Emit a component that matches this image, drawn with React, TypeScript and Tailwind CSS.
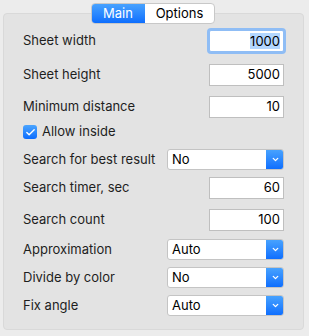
import { Check, ChevronDown } from "lucide-react";

const font = { fontFamily: "Inter, 'Liberation Sans', sans-serif" };

const TextField = ({ value, focused }: { value: string; focused?: boolean }) => (
  <div
    className={`w-[75px] h-[22px] bg-white flex items-center justify-end pr-[3px] text-[13px] text-black ${
      focused
        ? "border border-[#8fbdf5] rounded-[2px] shadow-[0_0_0_2px_#8fbdf5]"
        : "border border-[#bfbfbf]"
    }`}
  >
    {focused ? <span className="bg-[#b3d7ff] leading-[16px]">{value}</span> : value}
  </div>
);

const PopUp = ({ value }: { value: string }) => (
  <div className="w-[117px] h-[21px] flex rounded-[3px] overflow-hidden border border-[#c4c4c4] bg-white">
    <div className="flex-1 flex items-center pl-[4px] text-[13px] text-black">{value}</div>
    <div className="w-[18px] -my-px -mr-px rounded-r-[3px] bg-gradient-to-b from-[#4aa4fe] to-[#0a6bfe] flex items-center justify-center">
      <ChevronDown className="w-[9px] h-[9px] text-white" strokeWidth={3.5} />
    </div>
  </div>
);

const Row = ({ label, children, mt }: { label: string; children: React.ReactNode; mt: string }) => (
  <div className={`flex items-center justify-between ${mt}`}>
    <span className="text-[13px] text-[#1e1e1e]">{label}</span>
    {children}
  </div>
);

export default function App() {
  return (
    <div className="w-[309px] h-[336px] bg-[#ececec] pt-[13px] px-[3px]" style={font}>
      <div className="relative h-[317px] w-[301px] rounded-[4px] border border-[#d9d9d9] bg-[#e3e3e3] px-[19px] pt-[16px]">
        {/* segmented tabs */}
        <div className="absolute -top-[11px] left-[87px] flex h-[21px] rounded-[4px] border border-[#c8c8c8] bg-white overflow-hidden text-[13px]">
          <div className="w-[54px] -my-px -ml-px flex items-center justify-center bg-gradient-to-b from-[#4aa4fe] to-[#0a6bfe] text-white rounded-l-[4px]">
            Main
          </div>
          <div className="w-[69px] flex items-center justify-center text-black">Options</div>
        </div>

        <Row label="Sheet width" mt="mt-0">
          <TextField value="1000" focused />
        </Row>
        <Row label="Sheet height" mt="mt-[12px]">
          <TextField value="5000" />
        </Row>
        <Row label="Minimum distance" mt="mt-[10px]">
          <TextField value="10" />
        </Row>
        <div className="flex items-center gap-[5px] mt-[7px] h-[14px]">
          <div className="w-[14px] h-[14px] rounded-[3px] bg-gradient-to-b from-[#4aa4fe] to-[#0a6bfe] flex items-center justify-center">
            <Check className="w-[11px] h-[11px] text-white" strokeWidth={3} />
          </div>
          <span className="text-[13px] text-[#1e1e1e]">Allow inside</span>
        </div>
        <Row label="Search for best result" mt="mt-[10px]">
          <PopUp value="No" />
        </Row>
        <Row label="Search timer, sec" mt="mt-[7px]">
          <TextField value="60" />
        </Row>
        <Row label="Search count" mt="mt-[10px]">
          <TextField value="100" />
        </Row>
        <Row label="Approximation" mt="mt-[8px]">
          <PopUp value="Auto" />
        </Row>
        <Row label="Divide by color" mt="mt-[7px]">
          <PopUp value="No" />
        </Row>
        <Row label="Fix angle" mt="mt-[7px]">
          <PopUp value="Auto" />
        </Row>
      </div>
    </div>
  );
}
